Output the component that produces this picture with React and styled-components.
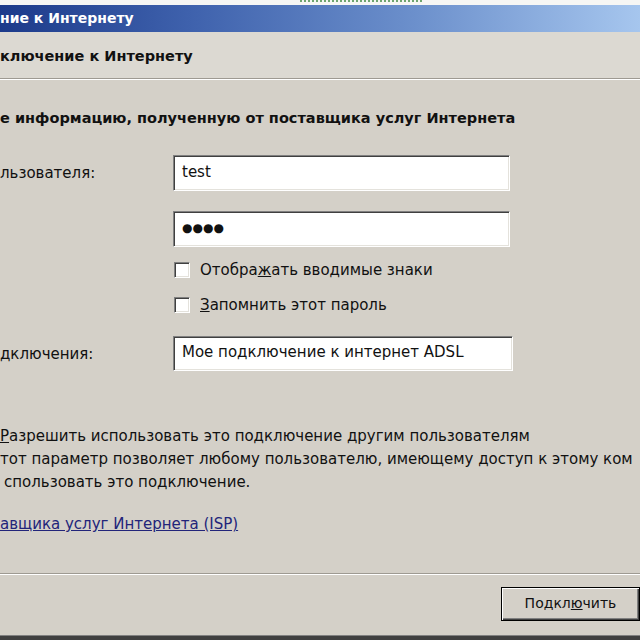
import styled, { createGlobalStyle, css } from "styled-components";

const GlobalStyle = createGlobalStyle`
  html, body {
    margin: 0;
    padding: 0;
    background: #d4d0c8;
    overflow: hidden;
  }
  * { box-sizing: border-box; }
`;

const Window = styled.div`
  width: 640px;
  height: 640px;
  display: flex;
  flex-direction: column;
  background: #d4d0c8;
  font-family: "DejaVu Sans", "Liberation Sans", sans-serif;
  font-size: 15px;
  color: #111;
  overflow: hidden;
`;

const TopStrip = styled.div`
  height: 5px;
  background: #f6f6f4;
  display: flex;
  padding-left: 300px;
`;

const Dots = styled.div`
  width: 122px;
  height: 3px;
  border-top: 2px dotted #6fa56f;
`;

const TitleBar = styled.div`
  height: 27px;
  display: flex;
  align-items: center;
  background: linear-gradient(to right, #1c3a8a 0%, #3f62ad 30%, #6c90cc 65%, #a6c6ee 100%);
  color: #fff;
  font-weight: bold;
  font-size: 14px;
  padding-bottom: 1px;
`;

const Header = styled.div`
  height: 46px;
  display: flex;
  align-items: center;
  background: #dcd9d2;
  font-weight: bold;
  font-size: 14.5px;
  padding-top: 2px;
`;

const Etched = styled.div`
  height: 2px;
  border-top: 1px solid #9e9a92;
  border-bottom: 1px solid #ffffff;
`;

const Body = styled.div`
  flex: 1;
  display: flex;
  flex-direction: column;
`;

const Instruction = styled.div`
  margin-top: 28px;
  line-height: 20px;
  font-weight: bold;
  font-size: 14.5px;
  white-space: nowrap;
`;

const FieldRow = styled.div`
  display: flex;
  align-items: center;
  margin-top: ${(p) => p.$top}px;
`;

const Label = styled.div`
  width: 173px;
  flex-shrink: 0;
`;

const inset = css`
  background: #fff;
  border-style: solid;
  border-width: 1px;
  border-color: #808080 #ffffff #ffffff #808080;
  box-shadow: inset 1px 1px #404040, inset -1px -1px #e4e2dc;
`;

const TextBox = styled.div`
  ${inset}
  width: ${(p) => p.$width}px;
  height: ${(p) => p.$height || 36}px;
  display: flex;
  align-items: center;
  padding-left: 8px;
  padding-bottom: 3px;
  white-space: nowrap;
`;

const Secret = styled.span`
  letter-spacing: 0;
  font-size: 12px;
`;

const CheckRow = styled.div`
  display: flex;
  align-items: center;
  gap: 10px;
  margin-left: 174px;
  margin-top: ${(p) => p.$top}px;
  height: 16px;
`;

const Box = styled.div`
  ${inset}
  width: 16px;
  height: 16px;
`;

const Key = styled.span`
  text-decoration: underline;
`;

const Para = styled.div`
  line-height: 23px;
  white-space: nowrap;
  padding-left: ${(p) => p.$indent || 0}px;
  margin-top: ${(p) => p.$top || 0}px;
`;

const Link = styled.a`
  display: block;
  margin-top: 19px;
  color: #22247a;
  text-decoration: underline;
  line-height: 23px;
  cursor: pointer;
`;

const Footer = styled.div`
  margin-top: auto;
  display: flex;
  flex-direction: column;
`;

const ButtonBar = styled.div`
  height: 60px;
  display: flex;
  justify-content: flex-end;
  align-items: flex-start;
  padding-top: 12px;
`;

const Button = styled.button`
  width: 139px;
  height: 34px;
  background: #d4d0c8;
  border: 1px solid #000;
  box-shadow: inset 1px 1px #ffffff, inset -1px -1px #404040, inset -2px -2px #808080;
  font-family: "DejaVu Sans", "Liberation Sans", sans-serif;
  font-size: 14px;
  color: #111;
  padding: 0 0 2px;
`;

const BottomEdge = styled.div`
  height: 5px;
  border-top: 1px solid #808080;
  background: #404040;
`;

export default function App() {
  return (
    <>
      <GlobalStyle />
      <Window>
        <TopStrip>
          <Dots />
        </TopStrip>
        <TitleBar>ние к Интернету</TitleBar>
        <Header>ключение к Интернету</Header>
        <Etched />
        <Body>
          <Instruction>е информацию, полученную от поставщика услуг Интернета</Instruction>
          <FieldRow $top={27}>
            <Label>льзователя:</Label>
            <TextBox $width={337}>test</TextBox>
          </FieldRow>
          <FieldRow $top={20}>
            <Label />
            <TextBox $width={337}>
              <Secret>●●●●</Secret>
            </TextBox>
          </FieldRow>
          <CheckRow $top={15}>
            <Box />
            <span>
              Отобра<Key>ж</Key>ать вводимые знаки
            </span>
          </CheckRow>
          <CheckRow $top={19}>
            <Box />
            <span>
              <Key>З</Key>апомнить этот пароль
            </span>
          </CheckRow>
          <FieldRow $top={23}>
            <Label>дключения:</Label>
            <TextBox $width={340} $height={35}>Мое подключение к интернет ADSL</TextBox>
          </FieldRow>
          <Para $top={54}>
            <Key>Р</Key>азрешить использовать это подключение другим пользователям
          </Para>
          <Para>тот параметр позволяет любому пользователю, имеющему доступ к этому ком</Para>
          <Para $indent={4}>спользовать это подключение.</Para>
          <Link>авщика услуг Интернета (ISP)</Link>
          <Footer>
            <Etched />
            <ButtonBar>
              <Button>
                Подкл<Key>ю</Key>чить
              </Button>
            </ButtonBar>
            <BottomEdge />
          </Footer>
        </Body>
      </Window>
    </>
  );
}
